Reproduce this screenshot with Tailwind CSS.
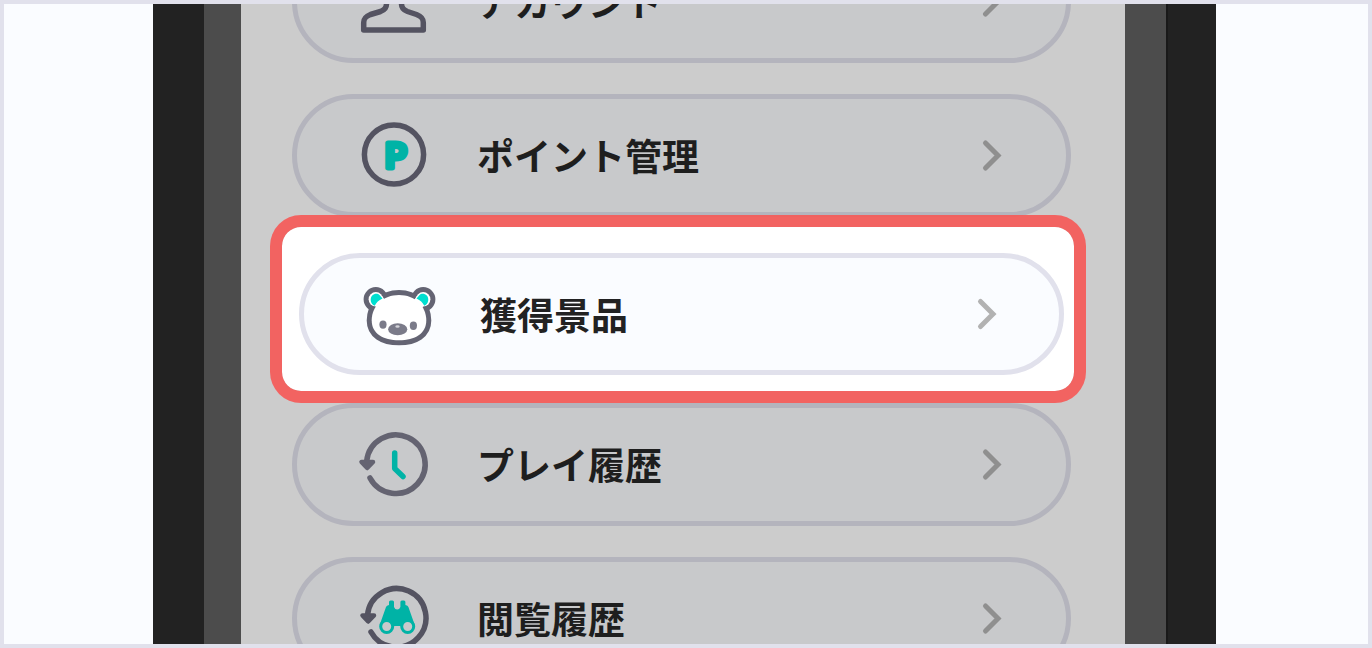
<!DOCTYPE html>
<html lang="ja">
  <head>
    <meta charset="UTF-8" />
    <meta name="viewport" content="width=device-width, initial-scale=1.0" />
    <title>獲得景品</title>
    <script src="https://cdn.jsdelivr.net/npm/@tailwindcss/browser@4"></script>
  </head>
  <body class="bg-[#fafcff] font-['Noto_Sans_CJK_JP',sans-serif]">
    <main class="flex h-screen overflow-hidden border-4 border-[#e1e1ec] pl-[149px] pr-[152px]">
      <!-- Phone frame -->
      <div class="w-[51px] shrink-0 bg-[#222222]"></div>
      <div class="w-[37px] shrink-0 bg-[#4c4c4c]"></div>

      <nav class="min-w-0 flex-1 bg-[#cccccc] pl-[51px] pr-[54px]">
        <ul class="-mt-16 flex flex-col text-[37px] font-bold leading-none text-[#1e1e1e]">
          <li class="mb-[31px]">
            <a href="#account" class="flex h-[123px] items-center rounded-full border-5 border-[#b4b4bd] bg-[#c8c9cb] pl-[57px] pr-[62px]">
              <svg class="size-20 shrink-0" viewBox="0 0 80 80" fill="none" stroke="#545361" stroke-width="5.5" stroke-linejoin="round" aria-hidden="true">
                <path d="M32.500 38v4c0 4-2 6-6 7.500l-10 3c-5 2-6.800 4-6.800 8v7.500h59.600v-7.500c0-4-1.800-6-6.800-8l-9-3c-4-1.500-6-3.500-6-7.500v-4" />
                <circle cx="40" cy="24" r="15" />
              </svg>
              <span class="ml-[43px] flex-1">アカウント</span>
              <svg class="h-10 w-6 shrink-0" viewBox="0 0 24 40" fill="none" stroke="#8f8f8f" stroke-width="5" stroke-linecap="round" aria-hidden="true">
                <path d="M5.500 7l12.500 12.500L5.500 32" />
              </svg>
            </a>
          </li>

          <li>
            <a href="#points" class="flex h-[123px] items-center rounded-full border-5 border-[#b4b4bd] bg-[#c8c9cb] pl-[57px] pr-[62px]">
              <svg class="size-20 shrink-0" viewBox="0 0 80 80" aria-hidden="true">
                <circle cx="40" cy="38.500" r="29.600" fill="none" stroke="#545361" stroke-width="5.500" />
                <text x="41.500" y="52" text-anchor="middle" class="font-['Lato'] text-[35px] font-bold" fill="#00b3a6" stroke="#00b3a6" stroke-width="5" stroke-linejoin="round">P</text>
              </svg>
              <span class="ml-[43px] flex-1">ポイント管理</span>
              <svg class="h-10 w-6 shrink-0" viewBox="0 0 24 40" fill="none" stroke="#8f8f8f" stroke-width="5" stroke-linecap="round" aria-hidden="true">
                <path d="M5.500 7l12.500 12.500L5.500 32" />
              </svg>
            </a>
          </li>

          <!-- Highlighted row -->
          <li class="relative -ml-[22px] -mr-[15px] -mt-[2px] rounded-[31px] border-12 border-[#f65855]/90 bg-white bg-clip-padding pb-4 pl-[17px] pr-[10px] pt-[26px]">
            <a href="#prizes" class="flex h-[122px] items-center rounded-full border-5 border-[#e1e1ec] bg-[#fafcff] pl-[53px] pr-[60px] text-[#222222]">
              <svg class="size-20 shrink-0" viewBox="0 0 80 80" aria-hidden="true">
                <g fill="#646473" stroke="#646473" stroke-width="10" stroke-linejoin="round">
                  <circle cx="18.800" cy="25.300" r="7.200" />
                  <circle cx="66.200" cy="25.300" r="7.200" />
                  <path d="M42 21C58 21 69.300 32 69.300 46.500C69.300 59.500 58 66.300 42 66.300S14.700 59.500 14.700 46.500C14.700 32 26 21 42 21Z" />
                </g>
                <g fill="#ffffff">
                  <circle cx="18.800" cy="25.300" r="7.200" />
                  <circle cx="66.200" cy="25.300" r="7.200" />
                  <path d="M42 21C58 21 69.300 32 69.300 46.500C69.300 59.500 58 66.300 42 66.300S14.700 59.500 14.700 46.500C14.700 32 26 21 42 21Z" />
                  <path d="M25 22l3 4-8 8-3-4zM60 22l-3 4 8 8 3-4z" />
                </g>
                <path d="M15.200 21.500c2.500-2.300 5.500-2 7.500-.3l2.800 3.300c-4 1.800-6 4-7.800 7.200-4-1.700-5.300-6.700-2.500-10.200zM69.800 21.500c-2.500-2.300-5.500-2-7.500-.3l-2.800 3.300c4 1.800 6 4 7.800 7.200 4-1.700 5.300-6.700 2.500-10.200z" fill="#00dfd0" />
                <g fill="#7b7b89">
                  <ellipse cx="26" cy="50.600" rx="3.600" ry="4.200" />
                  <ellipse cx="56.400" cy="51.800" rx="3.600" ry="4.200" />
                  <ellipse cx="40.700" cy="55.200" rx="9.600" ry="6" />
                </g>
                <ellipse cx="40.500" cy="52.500" rx="2.200" ry="1.300" fill="#d5d5da" />
              </svg>
              <span class="ml-[43px] flex-1">獲得景品</span>
              <svg class="h-10 w-6 shrink-0" viewBox="0 0 24 40" fill="none" stroke="#b2b2b2" stroke-width="5" stroke-linecap="round" aria-hidden="true">
                <path d="M5.500 7.500L18 20L5.500 32.500" />
              </svg>
            </a>
          </li>

          <li class="mb-[31px]">
            <a href="#plays" class="flex h-[123px] items-center rounded-full border-5 border-[#b4b4bd] bg-[#c8c9cb] pl-[57px] pr-[62px]">
              <svg class="size-20 shrink-0" viewBox="0 0 80 80" fill="none" stroke-width="5.500" stroke-linecap="round" stroke-linejoin="round" aria-hidden="true">
                <path d="M12.700 36A29.300 29.300 0 1 1 16 53" stroke="#646371" />
                <path d="M7.500 37h11.500l-5.800 6z" fill="#646371" stroke="#646371" stroke-width="4.500" />
                <path d="M40.700 28v15.500l8.300 8" stroke="#00b3a6" stroke-width="5.500" />
              </svg>
              <span class="ml-[43px] flex-1">プレイ履歴</span>
              <svg class="h-10 w-6 shrink-0" viewBox="0 0 24 40" fill="none" stroke="#8f8f8f" stroke-width="5" stroke-linecap="round" aria-hidden="true">
                <path d="M5.500 7l12.500 12.500L5.500 32" />
              </svg>
            </a>
          </li>

          <li>
            <a href="#views" class="flex h-[123px] items-center rounded-full border-5 border-[#b4b4bd] bg-[#c8c9cb] pl-[57px] pr-[62px]">
              <svg class="size-20 shrink-0" viewBox="0 0 80 80" fill="none" stroke-width="5.500" stroke-linecap="round" stroke-linejoin="round" aria-hidden="true">
                <path d="M13.500 36A29.300 29.300 0 1 1 17 53" stroke="#545361" />
                <path d="M8.500 36.500h11.500l-5.800 6z" fill="#646371" stroke="#545361" stroke-width="4.500" />
                <path d="M26 45l6-17q.5-1.500 3-2v-3q0-1.500 1.500-1.500h2q1.500 0 1.500 1.500v5q1 2.500 3.200 2.500t3.200-2.500v-5q0-1.500 1.500-1.500h2q1.500 0 1.500 1.500v3q2.500.5 3 2l6 17-6.800-3-6.400 5h-8l-6.400-5z" fill="#00b3a6" />
                <circle cx="32.700" cy="47.500" r="6" fill="#c8c9cb" stroke="#00b3a6" stroke-width="3" />
                <circle cx="53.700" cy="47.500" r="6" fill="#c8c9cb" stroke="#00b3a6" stroke-width="3" />
              </svg>
              <span class="ml-[43px] flex-1">閲覧履歴</span>
              <svg class="h-10 w-6 shrink-0" viewBox="0 0 24 40" fill="none" stroke="#8f8f8f" stroke-width="5" stroke-linecap="round" aria-hidden="true">
                <path d="M5.500 7l12.500 12.500L5.500 32" />
              </svg>
            </a>
          </li>
        </ul>
      </nav>

      <div class="w-[41px] shrink-0 bg-[#4c4c4c]"></div>
      <div class="w-[50px] shrink-0 border-l-2 border-[#191919] bg-[#222222]"></div>
    </main>
  </body>
</html>
